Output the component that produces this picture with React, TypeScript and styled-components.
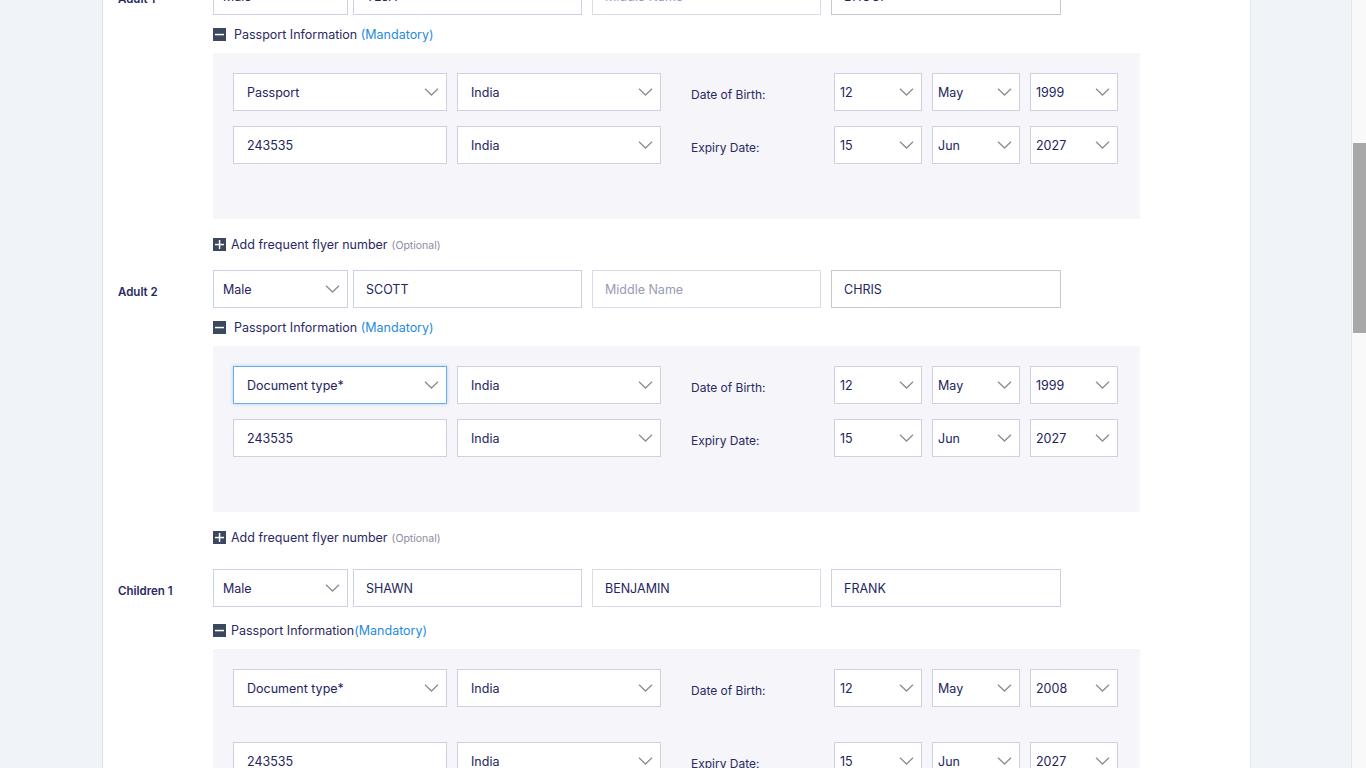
import React from "react";
import styled, { createGlobalStyle } from "styled-components";

const Global = createGlobalStyle`
  html, body { margin: 0; padding: 0; height: 100%; overflow: hidden; }
  body { background: #f0f4f8; font-family: Inter, "Noto Sans", Arial, sans-serif; color: #22225c; }
  * { box-sizing: border-box; }
`;

const Page = styled.div`
  display: flex;
  padding-left: 102px;
  padding-right: 115px;
  height: 100vh;
  overflow: hidden;
`;

const Card = styled.div`
  flex: 1;
  background: #fff;
  border-left: 1px solid #dfe2ea;
  border-right: 1px solid #e6e9ef;
  padding: 0 0 0 15px;
  margin-top: -23px;
`;

const Traveller = styled.section<{ $gapAfter?: number }>`
  display: flex;
  flex-direction: column;
  padding-bottom: ${(p) => p.$gapAfter ?? 19}px;
`;

const NameRow = styled.div`
  display: flex;
  align-items: center;
`;

const PaxLabel = styled.div`
  width: 95px;
  font-size: 11.5px;
  font-weight: 600;
  color: #2a2a62;
  padding-top: 6px;
`;

const Field = styled.div<{ $w: number; $ml?: number; $pl?: number; $border?: string; $focus?: boolean }>`
  position: relative;
  width: ${(p) => p.$w}px;
  height: 38px;
  margin-left: ${(p) => p.$ml ?? 0}px;
  padding-left: ${(p) => p.$pl ?? 12}px;
  padding-right: 26px;
  background: #fff;
  border: 1px solid ${(p) => (p.$focus ? "#6aaee8" : p.$border ?? "#ccd2e3")};
  box-shadow: ${(p) => (p.$focus ? "0 0 3px rgba(80,160,230,0.45)" : "none")};
  display: flex;
  align-items: center;
  font-size: 12.5px;
  color: #24245e;
  white-space: nowrap;
`;

const Placeholder = styled.span`
  color: #9a9ab4;
`;

const Chevron = styled.svg`
  position: absolute;
  right: 7px;
  top: 50%;
  margin-top: -4px;
`;

const ToggleRow = styled.div<{ $mt: number; $gap: number }>`
  display: flex;
  align-items: center;
  margin-top: ${(p) => p.$mt}px;
  margin-left: 95px;
  gap: ${(p) => p.$gap}px;
  font-size: 12.5px;
  color: #2a2a62;
  height: 14px;
  white-space: nowrap;
`;

const IconBox = styled.span`
  width: 13px;
  height: 13px;
  background: #3b4860;
  display: inline-flex;
  align-items: center;
  justify-content: center;
  flex: none;
`;

const Mandatory = styled.span`
  color: #1f8be0;
`;

const Optional = styled.span`
  color: #8c8ca6;
  font-size: 10.5px;
  margin-left: 4px;
`;

const Panel = styled.div<{ $rowGap: number; $pb: number }>`
  margin-top: 12px;
  margin-left: 95px;
  width: 927px;
  background: #f5f5fa;
  padding: 20px 20px ${(p) => p.$pb}px 20px;
  display: flex;
  flex-direction: column;
  gap: ${(p) => p.$rowGap}px;
`;

const PanelRow = styled.div`
  display: flex;
  align-items: center;
`;

const DateLabel = styled.div`
  width: 143px;
  margin-left: 30px;
  font-size: 12px;
  color: #2a2a62;
  padding-top: 4px;
`;

const DateGroup = styled.div`
  display: flex;
  gap: 10px;
`;

const FlyerRow = styled(ToggleRow)``;

const ScrollTrack = styled.div`
  position: fixed;
  right: 0;
  top: 0;
  width: 15px;
  height: 100vh;
  background: #f9f9f9;
  border-left: 1px solid #e6e6e6;
`;

const ScrollThumb = styled.div`
  position: absolute;
  left: 1px;
  right: 0;
  top: 143px;
  height: 190px;
  background: #a8a8a8;
`;

const ChevronIcon = () => (
  <Chevron width="15" height="8" viewBox="0 0 15 8">
    <path d="M1 0.8 L7.5 7 L14 0.8" fill="none" stroke="#8d8d8d" strokeWidth="1.3" />
  </Chevron>
);

const Select = ({ w, ml, pl, value, placeholder, focus }: { w: number; ml?: number; pl?: number; value: string; placeholder?: boolean; focus?: boolean }) => (
  <Field $w={w} $ml={ml} $pl={pl} $focus={focus}>
    {placeholder ? <Placeholder>{value}</Placeholder> : value}
    <ChevronIcon />
  </Field>
);

const Minus = () => (
  <IconBox>
    <svg width="9" height="9" viewBox="0 0 9 9"><rect x="0" y="3.8" width="9" height="1.5" fill="#fff" /></svg>
  </IconBox>
);
const Plus = () => (
  <IconBox>
    <svg width="9" height="9" viewBox="0 0 9 9"><rect x="0" y="3.8" width="9" height="1.5" fill="#fff" /><rect x="3.8" y="0" width="1.5" height="9" fill="#fff" /></svg>
  </IconBox>
);

type Pax = {
  label: string;
  first: string;
  middle?: string;
  last: string;
  doc: string;
  docFocus?: boolean;
  year: string;
  child?: boolean;
};

const travellers: Pax[] = [
  { label: "Adult 1", first: "TEJA", last: "BHOGI", doc: "Passport", year: "1999" },
  { label: "Adult 2", first: "SCOTT", last: "CHRIS", doc: "Document type*", docFocus: true, year: "1999" },
  { label: "Children 1", first: "SHAWN", middle: "BENJAMIN", last: "FRANK", doc: "Document type*", year: "2008", child: true },
];

const TravellerBlock = ({ p, gapAfter }: { p: Pax; gapAfter: number }) => (
  <Traveller $gapAfter={gapAfter}>
    <NameRow>
      <PaxLabel>{p.label}</PaxLabel>
      <Select w={135} pl={9} value="Male" />
      <Field $w={229} $ml={5}>{p.first}</Field>
      <Field $w={229} $ml={10} $border="#dcdbec">
        {p.middle ? p.middle : <Placeholder>Middle Name</Placeholder>}
      </Field>
      <Field $w={230} $ml={10} $border={p.middle ? undefined : "#c9c9c9"}>{p.last}</Field>
    </NameRow>
    <ToggleRow $mt={p.child ? 16 : 12} $gap={p.child ? 5 : 8}>
      <Minus />
      {p.child ? (
        <span>Passport Information<Mandatory>(Mandatory)</Mandatory></span>
      ) : (
        <span>Passport Information <Mandatory>(Mandatory)</Mandatory></span>
      )}
    </ToggleRow>
    <Panel $rowGap={p.child ? 35 : 15} $pb={55}>
      <PanelRow>
        <Select w={214} pl={13} value={p.doc} focus={p.docFocus} />
        <Select w={204} ml={10} pl={13} value="India" />
        <DateLabel>Date of Birth:</DateLabel>
        <DateGroup>
          <Select w={88} pl={5} value="12" />
          <Select w={88} pl={5} value="May" />
          <Select w={88} pl={5} value={p.year} />
        </DateGroup>
      </PanelRow>
      <PanelRow>
        <Field $w={214} $pl={13}>243535</Field>
        <Select w={204} ml={10} pl={13} value="India" />
        <DateLabel>Expiry Date:</DateLabel>
        <DateGroup>
          <Select w={88} pl={5} value="15" />
          <Select w={88} pl={5} value="Jun" />
          <Select w={88} pl={5} value="2027" />
        </DateGroup>
      </PanelRow>
    </Panel>
    <FlyerRow $mt={18} $gap={5}>
      <Plus />
      <span>Add frequent flyer number<Optional>(Optional)</Optional></span>
    </FlyerRow>
  </Traveller>
);

export default function App() {
  return (
    <>
      <Global />
      <Page>
        <Card>
          <TravellerBlock p={travellers[0]} gapAfter={19} />
          <TravellerBlock p={travellers[1]} gapAfter={25} />
          <TravellerBlock p={travellers[2]} gapAfter={20} />
        </Card>
      </Page>
      <ScrollTrack>
        <ScrollThumb />
      </ScrollTrack>
    </>
  );
}
